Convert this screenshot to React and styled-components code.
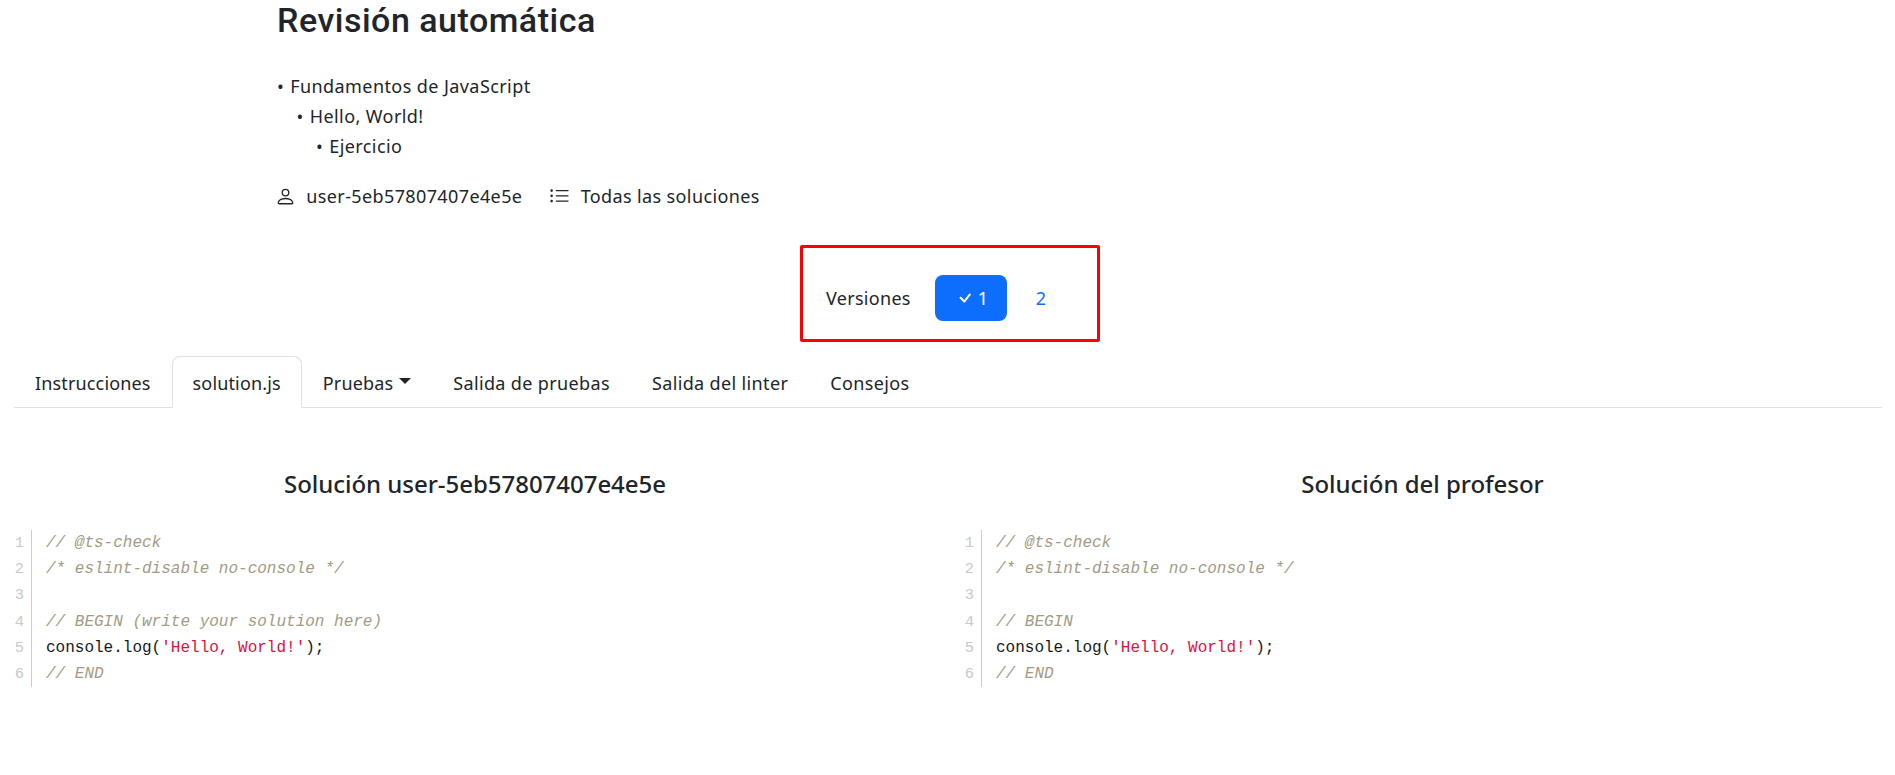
import React from 'react';
import styled, { createGlobalStyle } from 'styled-components';
import { BsPerson, BsListUl, BsCheck } from 'react-icons/bs';

const Global = createGlobalStyle`
  html, body { margin: 0; padding: 0; background: #fff; }
  body { font-family: "Noto Sans", "Open Sans", sans-serif; font-size: 16px; color: #212529; }
`;
const Page = styled.div`height: 775px; overflow: hidden; display: flex; flex-direction: column;`;
const Header = styled.header`padding-left: 277px; display: flex; flex-direction: column;`;
const Title = styled.h1`margin: 0; font-family: Roboto, sans-serif; font-size: 34px; line-height: 40px; font-weight: 500; height: 40px; letter-spacing: 0.5px;`;
const Crumbs = styled.ul`list-style: none; margin: 31px 0 0; padding: 0;`;
const Crumb = styled.li`
  line-height: 30px; height: 30px; font-size: 18px; letter-spacing: 0.42px;
  padding-left: ${p => p.$level * 19.5}px;
  &::before { content: "•"; margin-right: 6px; }
`;
const Meta = styled.div`display: flex; align-items: center; margin-top: 20px; gap: 29px; height: 30px;`;
const MetaItem = styled.span`display: inline-flex; align-items: center; gap: 10.3px; font-size: 18px; letter-spacing: 0.38px;
  svg { width: 21px; height: 21px; margin-left: -2px; }
`;
const VersionsWrap = styled.div`display: flex; justify-content: center; margin-top: 34px; padding-left: 5px;`;
const Versions = styled.div`
  width: 300px; height: 97px; box-sizing: border-box; border: 3px solid #fe0000; border-radius: 2px;
  display: flex; align-items: center; padding: 9px 0 0 23px; font-size: 18px; letter-spacing: 0.3px;
`;
const VersionsLabel = styled.span`width: 109px; flex: none;`;
const VersionActive = styled.span`
  width: 72px; height: 46px; background: #0d6efd; color: #fff; border-radius: 8px;
  display: inline-flex; align-items: center; justify-content: center; gap: 2px; font-size: 18px;
  svg { width: 22px; height: 22px; }
`;
const VersionLink = styled.span`width: 68px; text-align: center; color: #0d6efd; font-size: 18px;`;
const Tabs = styled.nav`margin: 14px 13px 0 14px; display: flex; border-bottom: 1px solid #dee2e6; height: 51px; box-sizing: content-box;`;
const Tab = styled.span`
  box-sizing: border-box; height: ${p => p.$active ? '52px' : '51px'}; padding: 2px 20px 0; display: inline-flex; align-items: center; gap: 6px;
  font-size: 18px; letter-spacing: ${p => p.$wide ? '0.36px' : '0.15px'}; white-space: nowrap;
  border: 1px solid ${p => p.$active ? '#dee2e6' : 'transparent'};
  border-bottom-color: ${p => p.$active ? '#fff' : 'transparent'};
  border-radius: 8px 8px 0 0;
  background: #fff;
`;
const Caret = styled.i`width: 0; height: 0; border-left: 6px solid transparent; border-right: 6px solid transparent; border-top: 6px solid #212529; margin-top: -3px;`;
const Columns = styled.div`display: grid; grid-template-columns: 950px 1fr; margin-top: 61px;`;
const Column = styled.section`min-width: 0;`;
const ColumnTitle = styled.h4`margin: 0 0 31px; text-align: center; font-size: 24px; line-height: 30px; font-weight: 500; letter-spacing: -0.03px;`;
const Code = styled.div`margin-left: 14px; font-family: "Liberation Mono", monospace; font-size: 16px; line-height: 26.2px;`;
const Line = styled.div`display: flex; height: 26.2px;`;
const Num = styled.span`width: 10px; text-align: right; color: #c9c9c9; border-right: 1px solid #ccc; box-sizing: content-box; padding-right: 7px; margin-right: 14px; font-size: 15.5px;`;
const Comment = styled.span`color: #a29b85; font-style: italic;`;
const Str = styled.span`color: #e0103e;`;
const Plain = styled.span`color: #14181c;`;

const CodeBlock = ({ begin }) => {
  const lines = [
    <Comment>// @ts-check</Comment>,
    <Comment>/* eslint-disable no-console */</Comment>,
    null,
    <Comment>{begin}</Comment>,
    <Plain>console.log(<Str>'Hello, World!'</Str>);</Plain>,
    <Comment>// END</Comment>,
  ];
  return (
    <Code>
      {lines.map((l, i) => (
        <Line key={i}><Num>{i + 1}</Num>{l}</Line>
      ))}
    </Code>
  );
};

export default function App() {
  return (
    <Page>
      <Global />
      <Header>
        <Title>Revisión automática</Title>
        <Crumbs>
          <Crumb $level={0}>Fundamentos de JavaScript</Crumb>
          <Crumb $level={1}>Hello, World!</Crumb>
          <Crumb $level={2}>Ejercicio</Crumb>
        </Crumbs>
        <Meta>
          <MetaItem><BsPerson />user-5eb57807407e4e5e</MetaItem>
          <MetaItem><BsListUl />Todas las soluciones</MetaItem>
        </Meta>
      </Header>
      <VersionsWrap>
        <Versions>
          <VersionsLabel>Versiones</VersionsLabel>
          <VersionActive><BsCheck />1</VersionActive>
          <VersionLink>2</VersionLink>
        </Versions>
      </VersionsWrap>
      <Tabs>
        <Tab>Instrucciones</Tab>
        <Tab $active>solution.js</Tab>
        <Tab>Pruebas<Caret /></Tab>
        <Tab $wide>Salida de pruebas</Tab>
        <Tab $wide>Salida del linter</Tab>
        <Tab $wide>Consejos</Tab>
      </Tabs>
      <Columns>
        <Column>
          <ColumnTitle>Solución user-5eb57807407e4e5e</ColumnTitle>
          <CodeBlock begin="// BEGIN (write your solution here)" />
        </Column>
        <Column>
          <ColumnTitle>Solución del profesor</ColumnTitle>
          <CodeBlock begin="// BEGIN" />
        </Column>
      </Columns>
    </Page>
  );
}
